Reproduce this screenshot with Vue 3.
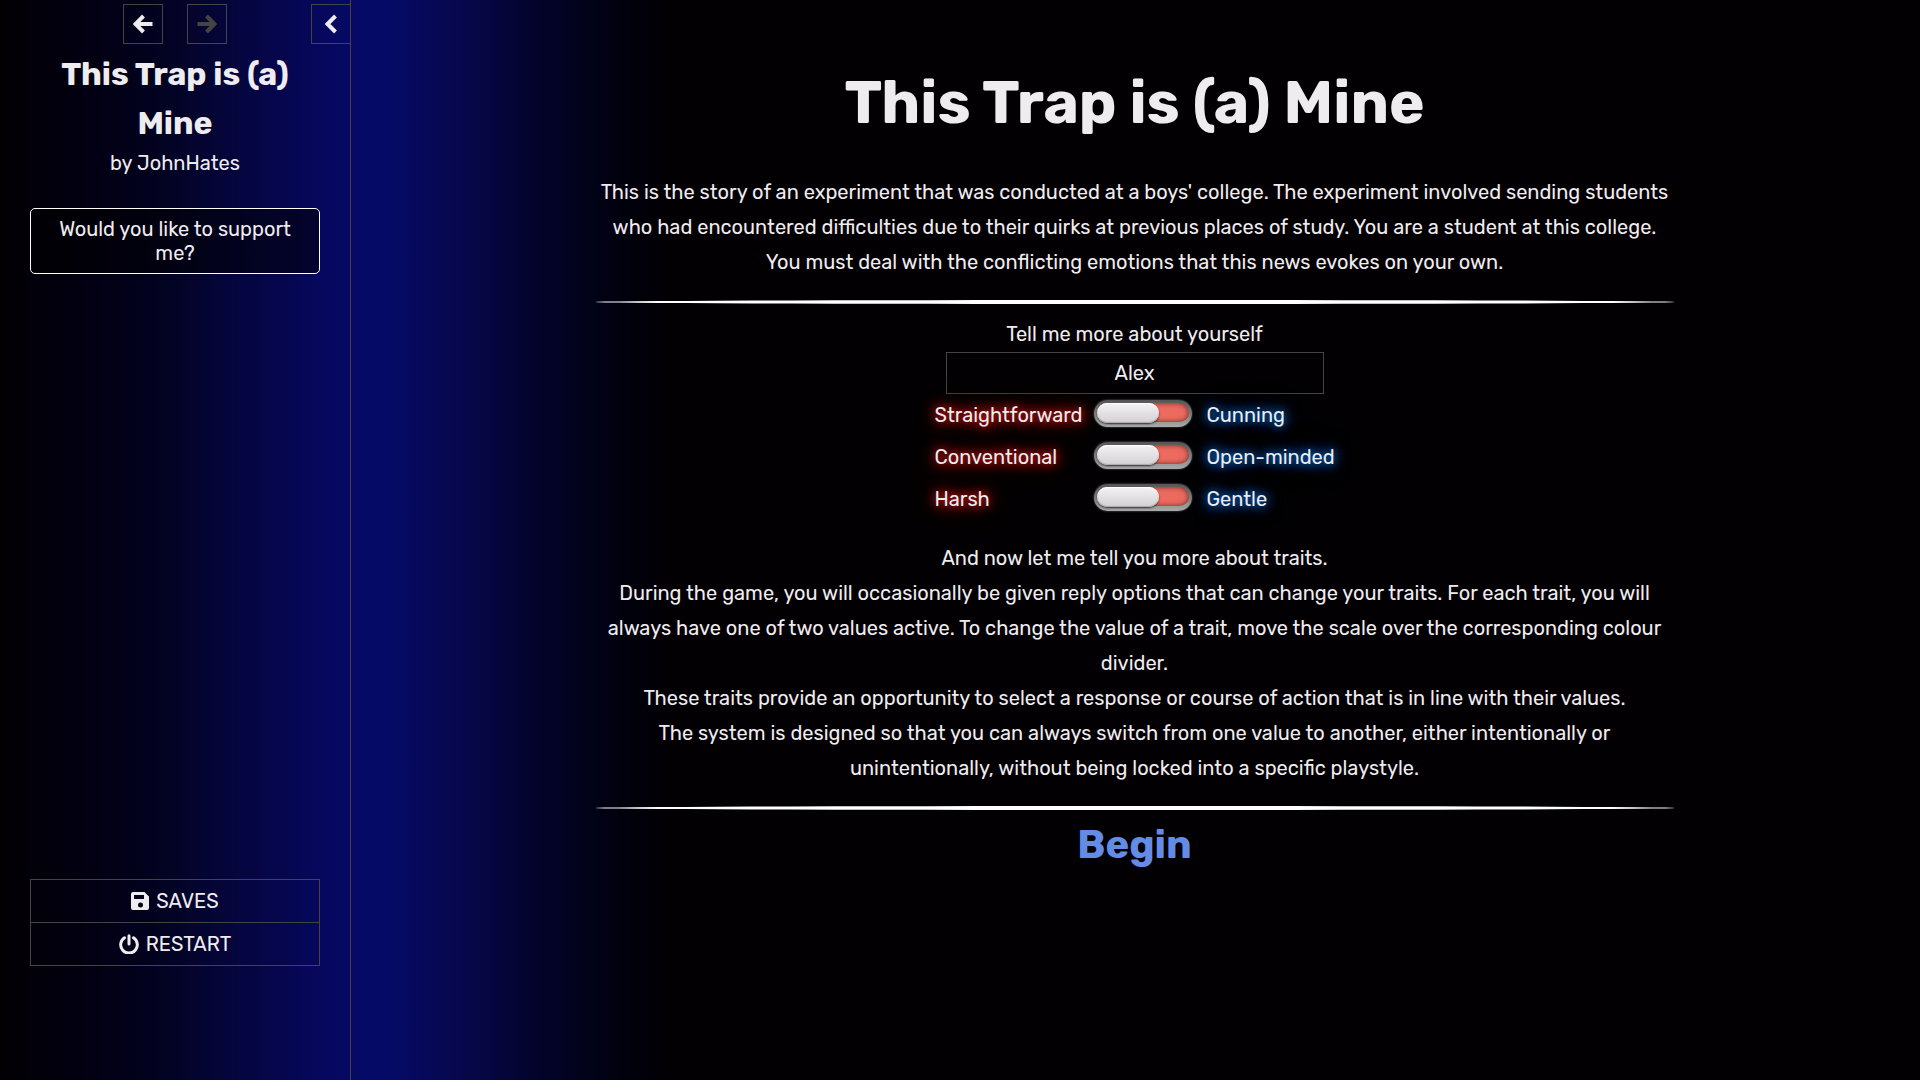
<template>
  <div class="game">
    <aside class="ui-bar">
      <div class="tray">
        <nav class="history" aria-label="History">
          <button type="button" class="tray-button" aria-label="Go back">
            <svg viewBox="0 0 20 20" class="tray-icon">
              <path d="M10.500 2 L2.500 10 L10.500 18 M3 10 H19.500" />
            </svg>
          </button>
          <button type="button" class="tray-button" aria-label="Go forward" disabled>
            <svg viewBox="0 0 20 20" class="tray-icon">
              <path d="M9.500 2 L17.500 10 L9.500 18 M17 10 H0.500" />
            </svg>
          </button>
        </nav>
        <button type="button" class="tray-button toggle" aria-label="Toggle the UI bar">
          <svg viewBox="0 0 20 20" class="tray-icon">
            <path d="M14.500 2 L6.500 10 L14.500 18" />
          </svg>
        </button>
      </div>

      <div class="story-info">
        <h2 class="story-title">This Trap is (a) Mine</h2>
        <p class="story-author">by JohnHates</p>
        <button type="button" class="support-button">Would you like to support me?</button>
      </div>

      <ul class="menu">
        <li>
          <button type="button" class="menu-button">
            <svg viewBox="0 0 18 18" class="menu-icon">
              <path
                fill-rule="evenodd"
                d="M2 0H13.500L18 4.500V16a2 2 0 0 1-2 2H2a2 2 0 0 1-2-2V2a2 2 0 0 1 2-2ZM3 3V7H13V3ZM9.500 10.500a2.500 2.500 0 1 0 0 5a2.500 2.500 0 0 0 0-5Z"
              />
            </svg>
            Saves
          </button>
        </li>
        <li>
          <button type="button" class="menu-button">
            <svg viewBox="0 0 20 20" class="menu-icon power">
              <path d="M5.500 3.800A8.300 8.300 0 1 0 14.500 3.800M10 1.800V10" />
            </svg>
            Restart
          </button>
        </li>
      </ul>
    </aside>

    <main class="story">
      <div class="passage">
        <h1>This Trap is (a) Mine</h1>
        <p>
          This is the story of an experiment that was conducted at a boys' college. The experiment involved sending
          students who had encountered difficulties due to their quirks at previous places of study. You are a student
          at this college. You must deal with the conflicting emotions that this news evokes on your own.
        </p>
        <hr />

        <label for="player-name" class="name-label">Tell me more about yourself</label>
        <input id="player-name" v-model="playerName" type="text" class="name-input" />

        <div class="traits">
          <div v-for="trait in traits" :key="trait.key" class="trait">
            <label :for="trait.key" class="trait-left">{{ trait.left }}</label>
            <input :id="trait.key" v-model="trait.active" type="checkbox" class="switch" />
            <label :for="trait.key" class="trait-right">{{ trait.right }}</label>
          </div>
        </div>

        <p v-for="line in traitHelp" :key="line">{{ line }}</p>
        <hr />
        <a href="#begin" class="begin">Begin</a>
      </div>
    </main>
  </div>
</template>

<script setup>
import { ref } from 'vue'

const playerName = ref('Alex')

const traits = ref([
  { key: 'cunning', left: 'Straightforward', right: 'Cunning', active: false },
  { key: 'open-minded', left: 'Conventional', right: 'Open-minded', active: false },
  { key: 'gentle', left: 'Harsh', right: 'Gentle', active: false }
])

const traitHelp = [
  'And now let me tell you more about traits.',
  'During the game, you will occasionally be given reply options that can change your traits. For each trait, you will always have one of two values active. To change the value of a trait, move the scale over the corresponding colour divider.',
  'These traits provide an opportunity to select a response or course of action that is in line with their values.',
  'The system is designed so that you can always switch from one value to another, either intentionally or unintentionally, without being locked into a specific playstyle.'
]
</script>

<style>
body {
  background: #020003;
}
</style>

<style scoped>
.game {
  background: linear-gradient(
    90deg,
    #020003 0,
    #020012 90px,
    #02021e 150px,
    #04042c 190px,
    #05053c 230px,
    #06064e 280px,
    #06085e 325px,
    #050a66 365px,
    #050a66 390px,
    #060854 440px,
    #060640 490px,
    #03032c 535px,
    #02021c 580px,
    #01010e 620px,
    #020003 670px
  );
  box-sizing: border-box;
  color: #efecf0;
  display: flex;
  font-family: Rubik, Roboto, sans-serif;
  font-size: 20px;
  line-height: 35px;
  min-height: 100vh;
}

.game *,
.game *::before {
  box-sizing: border-box;
}

button,
input {
  background: transparent;
  border: 1px solid #444;
  color: #efecf0;
  font: inherit;
  margin: 0;
}

button {
  cursor: pointer;
}

.ui-bar {
  border-right: 1px solid #444;
  display: flex;
  flex: 0 0 351px;
  flex-direction: column;
  padding: 4px 0 114px;
  text-align: center;
}

.tray {
  display: grid;
  grid-template-columns: 1fr auto 1fr;
}

.history {
  display: flex;
  gap: 24px;
  grid-column: 2;
}

.tray-button {
  align-items: center;
  display: flex;
  height: 40px;
  justify-content: center;
  padding: 0;
  width: 40px;
}

.tray-button:disabled {
  color: #444;
  cursor: default;
}

.toggle {
  border-right: 0;
  justify-self: end;
  width: 39px;
}

.tray-icon {
  fill: none;
  height: 20px;
  stroke: currentColor;
  stroke-width: 4;
  width: 20px;
}

.story-info {
  padding: 6px 30px 0;
}

.story-title {
  font-size: 32px;
  font-weight: 700;
  line-height: 49px;
  margin: 0;
}

.story-author {
  line-height: 31px;
  margin: 0;
}

.support-button {
  background: rgba(0, 0, 0, 0.5);
  border: 1px solid #fff;
  border-radius: 5px;
  line-height: 24px;
  margin-top: 29px;
  padding: 8px 20px;
  width: 100%;
}

.menu {
  border: 1px solid #444;
  list-style: none;
  margin: auto 30px 0;
  padding: 0;
}

.menu li + li {
  border-top: 1px solid #444;
}

.menu-button {
  align-items: center;
  border: 0;
  display: flex;
  gap: 7px;
  height: 42px;
  justify-content: center;
  padding: 0;
  text-transform: uppercase;
  width: 100%;
}

.menu-icon {
  fill: currentColor;
  height: 18px;
  width: 18px;
}

.menu-icon.power {
  fill: none;
  height: 20px;
  stroke: currentColor;
  stroke-linecap: round;
  stroke-width: 3;
  width: 20px;
}

.story {
  flex: 1;
  padding: 50px 52px 50px 50px;
}

.passage {
  align-items: center;
  display: flex;
  flex-direction: column;
  margin: 0 auto;
  max-width: 1080px;
  text-align: center;
}

h1 {
  font-size: 60px;
  font-weight: 700;
  line-height: 105px;
  margin: 0 0 20px;
}

p {
  margin: 0;
}

hr {
  background: #fff;
  border: 0;
  border-radius: 50%;
  height: 4px;
  margin: 20px 0 13px;
  width: 100%;
}

.name-input {
  height: 42px;
  padding: 0 8px;
  text-align: center;
  width: 378px;
}

.traits {
  display: flex;
  flex-direction: column;
  margin: 0 0 21px;
  width: 400px;
}

.trait {
  align-items: center;
  display: grid;
  grid-template-columns: 159px 113px 1fr;
  height: 42px;
  text-align: left;
  white-space: nowrap;
}

.trait-left {
  text-shadow: 0 0 10px #f22, 0 0 16px #c11, 0 0 30px #900;
}

.trait-right {
  text-shadow: 0 0 10px #08f, 0 0 16px #06c, 0 0 30px #036;
}

.switch {
  appearance: none;
  background:
    linear-gradient(#ec6a5e, #ec6a5e) padding-box,
    linear-gradient(#555, #aaa) border-box;
  border: 3px solid transparent;
  border-bottom-width: 5px;
  border-radius: 14px;
  box-shadow: inset 0 0 5px rgba(0, 0, 0, 0.6), 0 0 2px #777;
  cursor: pointer;
  height: 27px;
  margin-bottom: 3px;
  width: 98px;
}

.switch::before {
  background: linear-gradient(#f4f2f4, #d4d0d4);
  border-radius: 10px;
  box-shadow: inset 0 1px 1px #fff, inset 0 -1px 1px #aaa, 0 1px 2px rgba(0, 0, 0, 0.7);
  content: '';
  display: block;
  height: 20px;
  width: 62px;
}

.switch:checked {
  background:
    linear-gradient(#4a90e2, #4a90e2) padding-box,
    linear-gradient(#555, #aaa) border-box;
}

.switch:checked::before {
  margin-left: auto;
}

.begin {
  color: #648ce6;
  font-size: 40px;
  font-weight: 700;
  line-height: 44px;
  text-decoration: none;
}
</style>
